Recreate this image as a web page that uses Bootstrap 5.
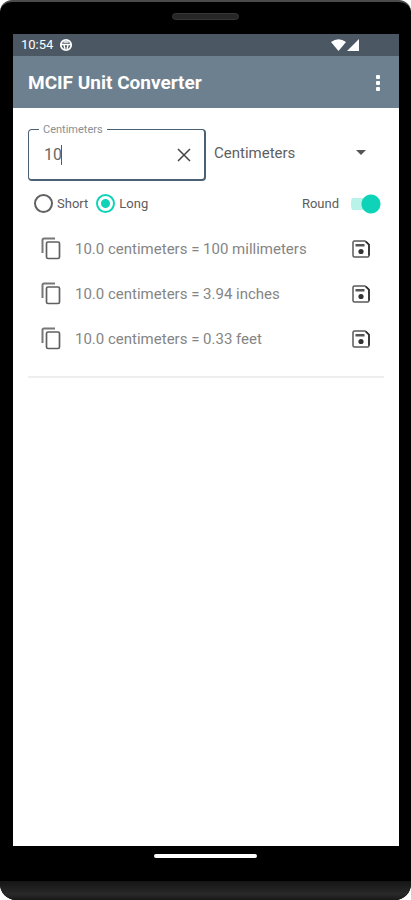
<!DOCTYPE html>
<html lang="en">
<head>
<meta charset="utf-8">
<meta name="viewport" content="width=device-width, initial-scale=1">
<title>MCIF Unit Converter</title>
<link href="https://cdn.jsdelivr.net/npm/bootstrap@5.3.0/dist/css/bootstrap.min.css" rel="stylesheet">
<style>
  body { font-family: Roboto, "Liberation Sans", sans-serif; background: #fff; color: #5c5c5c; }
  .device { background: #000; border-top: 2px solid #4a4a4a; border-radius: 12px 12px 16px 16px; overflow: hidden; }
  .bezel-top { height: 32px; padding-top: 11px; }
  .speaker { width: 67px; height: 7px; border-radius: 4px; background: #262626; border: 1px solid #363636; }
  .screen { margin: 0 12px 0 13px; background: #fff; }
  .status { height: 22px; background: #4b5763; padding: 0 38px 0 8px; font-size: 13px; line-height: 22px; }
  .appbar { height: 52px; background: #6d808f; padding: 2px 9px 0 15px; }
  .appbar h1 { font-size: 19px; line-height: 24px; font-weight: 700; }
  .plain { background: none; border: 0; padding: 0; color: inherit; }
  .dots { width: 24px; height: 32px; }
  .content { padding: 21px 15px 0; }
  .unit-box { border: 1px solid #4a6175; border-width: 1px 2px 2px 1px; border-radius: 4px; height: 52px; padding: 0 13px 0 15px; }
  .unit-box label { position: absolute; top: -8px; left: 10px; padding: 0 4px; background: #fff; color: #8a8f94; font-size: 11px; line-height: 16px; }
  .amount { width: 17px; border: 0; padding: 0; outline: 0; font-size: 16px; line-height: 24px; color: #666; background: none; }
  .caret { width: 1px; height: 20px; background: #4a6175; }
  .unit-select { appearance: none; border: 0; padding: 0 32px 0 8px; height: 48px; font-size: 15px; color: #606060; background: #fff; }
  .arrow { position: absolute; right: 18px; top: 21px; pointer-events: none; }
  .options { height: 45px; font-size: 13px; padding: 0 3px 0 6px; }
  .choice { appearance: none; width: 19px; height: 19px; margin: 0; border: 2px solid #616161; border-radius: 50%; background: #fff; }
  .choice:checked { border-color: #0ed3b8; background: radial-gradient(circle, #0ed3b8 0 4px, #fff 5px); }
  .toggle { appearance: none; width: 30px; height: 20px; margin: 0;
    background: radial-gradient(circle at 20px 10px, #0ed3b8 0 9px, transparent 10px), linear-gradient(#b8f2e9, #b8f2e9) 0 4px / 24px 12px no-repeat; border-radius: 8px 10px 10px 8px; }
  .result { height: 45px; padding: 0 14px 0 13px; gap: 14px; font-size: 15px; line-height: 20px; color: #858585; }
  .divider { height: 2px; background: #eee; margin-top: 15px; }
  .bezel-bottom { height: 35px; padding-top: 8px; }
  .home { width: 103px; height: 4px; border-radius: 2px; background: #fff; }
  .chin { height: 19px; background: linear-gradient(#151515, #292929 70%, #181818); }
</style>
<script src="https://cdn.jsdelivr.net/npm/bootstrap@5.3.0/dist/js/bootstrap.bundle.min.js"></script>
</head>
<body>
<svg class="d-none" aria-hidden="true">
  <symbol id="copy" viewBox="0 0 20 23"><path d="M1.5 16V3Q1.5 1.5 3 1.5H14" fill="none" stroke="#777" stroke-width="2"/><rect x="5.5" y="5" width="13" height="16.5" rx="1.5" fill="none" stroke="#606060" stroke-width="1.7"/></symbol>
  <symbol id="save" viewBox="0 0 18 18"><path d="M2.5 1H13l4 4v10.5q0 1.5-1.5 1.5h-13Q1 17 1 15.500V2.500Q1 1 2.500 1z" fill="none" stroke="#5a5a5a" stroke-width="1.500"/><path d="M14 1.500l3 3v11" fill="none" stroke="#2c2c2c" stroke-width="1.600"/><path d="M3.500 4h9v2.500h-9z" fill="#555"/><circle cx="9" cy="11.500" r="2.600" fill="#333"/></symbol>
</svg>
<div class="device min-vh-100 d-flex flex-column">
  <div class="bezel-top"><div class="speaker mx-auto"></div></div>
  <div class="screen flex-grow-1">
    <div class="status d-flex align-items-center justify-content-between text-white">
      <div class="d-flex align-items-center gap-1"><span>10:54</span>
        <svg width="16" height="14" viewBox="-2 0 16 14" fill="none" stroke="#fff"><circle cx="7" cy="7" r="5.200" stroke-width="1.800"/><path d="M2 6.500h10M5 7l1 4M9 7l-1 4M4.500 4h5" stroke-width="1.400"/></svg>
      </div>
      <svg width="30" height="14" viewBox="0 0 30 14" fill="#fff"><path d="M0 4Q7.500-1.500 15 4L7.500 13z"/><path d="M28 1v12H16z"/></svg>
    </div>
    <header class="appbar d-flex align-items-center justify-content-between text-white">
      <h1 class="m-0">MCIF Unit Converter</h1>
      <button type="button" class="plain dots d-flex align-items-center justify-content-center" aria-label="More options"><svg width="4" height="16" viewBox="0 0 4 16" fill="#fff"><rect width="4" height="4" rx="1"/><rect y="6" width="4" height="4" rx="1"/><rect y="12" width="4" height="4" rx="1"/></svg></button>
    </header>
    <main class="content">
      <div class="row g-0">
        <div class="col-6">
          <div class="unit-box position-relative d-flex align-items-center">
            <label for="amount">Centimeters</label>
            <input id="amount" class="amount" type="text" inputmode="decimal" value="10"><span class="caret"></span>
            <button type="button" class="plain d-flex ms-auto" aria-label="Clear"><svg width="14" height="14" viewBox="0 0 14 14" stroke="#454545" stroke-width="1.500"><path d="M1 1l12 12M13 1L1 13"/></svg></button>
          </div>
        </div>
        <div class="col-6 position-relative">
          <select class="unit-select w-100" aria-label="Unit"><option>Centimeters</option></select>
          <svg class="arrow" width="10" height="5" viewBox="0 0 10 5" fill="#555"><path d="M0 0h10L5 5z"/></svg>
        </div>
      </div>
      <div class="options d-flex align-items-center">
        <input class="choice" type="radio" name="form" id="short"><label class="ms-1 me-2" for="short">Short</label>
        <input class="choice" type="radio" name="form" id="long" checked><label class="ms-1" for="long">Long</label>
        <label class="ms-auto me-2 pe-1" for="round">Round</label><input class="toggle" type="checkbox" role="switch" id="round" checked>
      </div>
      <ul class="list-unstyled m-0">
        <li class="result d-flex align-items-center"><button type="button" class="plain d-flex" aria-label="Copy"><svg width="20" height="23"><use href="#copy"/></svg></button><span>10.0 centimeters = 100 millimeters</span><button type="button" class="plain d-flex ms-auto" aria-label="Save"><svg width="18" height="18"><use href="#save"/></svg></button></li>
        <li class="result d-flex align-items-center"><button type="button" class="plain d-flex" aria-label="Copy"><svg width="20" height="23"><use href="#copy"/></svg></button><span>10.0 centimeters = 3.94 inches</span><button type="button" class="plain d-flex ms-auto" aria-label="Save"><svg width="18" height="18"><use href="#save"/></svg></button></li>
        <li class="result d-flex align-items-center"><button type="button" class="plain d-flex" aria-label="Copy"><svg width="20" height="23"><use href="#copy"/></svg></button><span>10.0 centimeters = 0.33 feet</span><button type="button" class="plain d-flex ms-auto" aria-label="Save"><svg width="18" height="18"><use href="#save"/></svg></button></li>
      </ul>
      <div class="divider"></div>
    </main>
  </div>
  <div class="bezel-bottom"><div class="home mx-auto"></div></div>
  <div class="chin"></div>
</div>
</body>
</html>
